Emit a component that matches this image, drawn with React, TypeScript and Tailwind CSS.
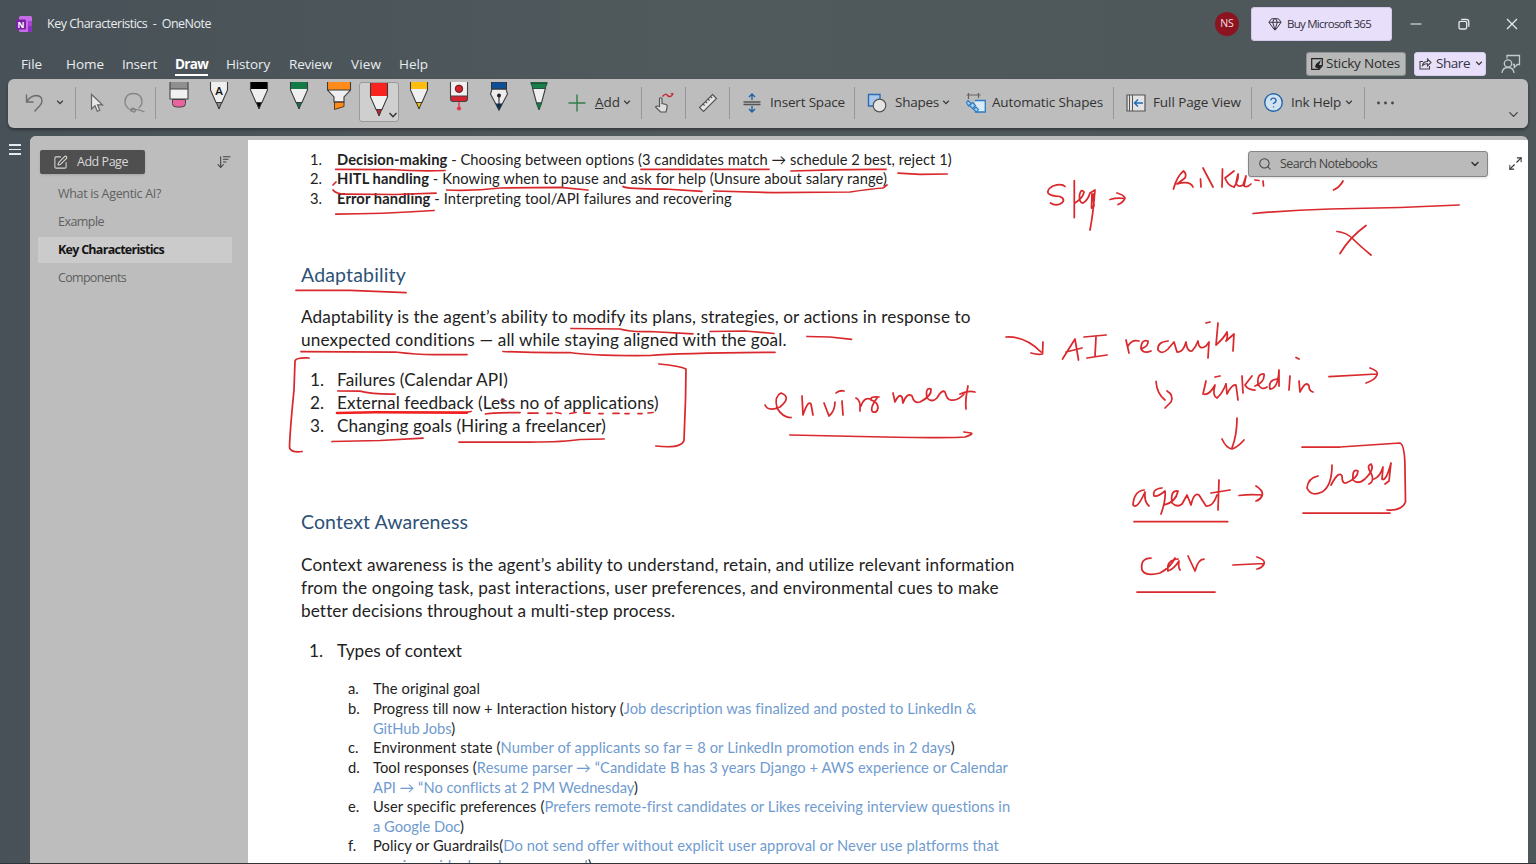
import { useLayoutEffect, useRef, type ReactNode } from "react";
import {
  ArrowDownWideNarrow,
  ChevronDown,
  CircleHelp,
  Gem,
  Maximize2,
  Search,
  SquarePen,
} from "lucide-react";

/** Single line of text whose letter spacing is adjusted to fill `w` pixels. */
function Fit({ w, className = "", children }: { w: number; className?: string; children: ReactNode }) {
  const ref = useRef<HTMLSpanElement>(null);
  useLayoutEffect(() => {
    const el = ref.current;
    if (!el) return;
    el.style.letterSpacing = "0px";
    const natural = el.getBoundingClientRect().width;
    const n = (el.textContent || "").length || 1;
    el.style.letterSpacing = `${(w - natural) / n}px`;
  }, [w]);
  return (
    <span ref={ref} className={`inline-block shrink-0 whitespace-pre ${className}`}>
      {children}
    </span>
  );
}

const Sep = ({ className = "" }: { className?: string }) => (
  <div className={`h-8 w-px shrink-0 bg-[#969696] ${className}`} />
);

const Chev = ({ className = "" }: { className?: string }) => (
  <svg viewBox="0 0 8 5" className={`h-[5px] w-2 shrink-0 ${className}`} fill="none" stroke="#3c3c3c" strokeWidth="1.3">
    <path d="M1.2 0.8 4 3.6 6.8 0.8" />
  </svg>
);

function Pen({ color, tip = color, letter = false, tall = false }: { color: string; tip?: string; letter?: boolean; tall?: boolean }) {
  const d = tall ? 6 : 0;
  return (
    <svg viewBox="0 0 20 40" className="h-10 w-5 shrink-0">
      <path d={`M1.5 0V${8 + d}L7 ${20 + d}h6L18.500 ${8 + d}V0z`} fill="#efefef" />
      {!letter && <path d={`M1 0h18v${7 + d}H1z`} fill={color} />}
      <path d={`M7.300 ${20.500 + d}h5.400L10 ${27 + d}z`} fill={tip} stroke="#333" strokeWidth="1" />
      <path d={`M1.500 0V${8 + d}L7 ${20.500 + d}h6L18.500 ${8 + d}V0`} fill="none" stroke="#3b3b3b" strokeWidth="1.1" />
      {letter && (
        <text x="10" y="12.500" textAnchor="middle" fontSize="11.500" fontWeight="600" fontFamily="Open Sans" fill="#111">
          A
        </text>
      )}
    </svg>
  );
}

const Eraser = () => (
  <svg viewBox="0 0 20 40" className="h-10 w-5">
    <path d="M1 0h18v7H1z" fill="#8f8f8f" />
    <path d="M1 7h18v10H1z" fill="#f1f1f1" />
    <path d="M3.500 17.500h13v4q0 3.500-4 3.500h-5q-4 0-4-3.500z" fill="#e8649f" stroke="#444" />
    <path d="M1 0v17h18V0M1 7h18" fill="none" stroke="#444" strokeWidth="1.1" />
  </svg>
);

const Highlighter = () => (
  <svg viewBox="0 0 26 40" className="h-10 w-[26px]">
    <path d="M1.500 0v8l6.500 7v5h10v-5l6.500-7V0z" fill="#efefef" />
    <path d="M1.500 0h23v8h-23z" fill="#ff8c1a" />
    <path d="M8.500 20h9.500v4.500L8.500 27.500z" fill="#ff8c1a" stroke="#5a3a1a" />
    <path d="M1.500 0v8l6.500 7v5h10v-5l6.500-7V0M1.500 8h23" fill="none" stroke="#3b3b3b" strokeWidth="1.100" />
  </svg>
);

const DotPen = () => (
  <svg viewBox="0 0 20 40" className="h-10 w-5">
    <path d="M1.500 0h17v14h-17z" fill="#f1f1f1" />
    <path d="M1.500 14h17v2.500q0 3-3 3h-11q-3 0-3-3z" fill="#d8232f" />
    <path d="M1.500 0v16.500q0 3 3 3h11q3 0 3-3V0M1.500 14h17" fill="none" stroke="#444" strokeWidth="1.100" />
    <circle cx="10" cy="6.800" r="3.700" fill="#d8232f" stroke="#5a1a1f" />
    <path d="M10 20v5" stroke="#e8334a" strokeWidth="1.400" />
    <circle cx="10" cy="26.500" r="2.100" fill="#e8334a" />
  </svg>
);

const Fountain = () => (
  <svg viewBox="0 0 20 40" className="h-10 w-5">
    <path d="M3 7h14l1.500 5L10 28 1.500 12z" fill="#ececec" stroke="#3b3b3b" strokeWidth="1.100" />
    <path d="M6.500 21.500h7L10 28.500z" fill="#12335c" />
    <path d="M2.500 0h15v7h-15z" fill="#0f4f96" stroke="#333" />
    <path d="M10 13v13" stroke="#222" />
    <circle cx="10" cy="13.500" r="2" fill="#222" />
  </svg>
);

const GreenFineliner = () => (
  <svg viewBox="0 0 20 40" className="h-10 w-5">
    <path d="M3.500 6l4 15h5l4-15z" fill="#efefef" stroke="#3b3b3b" strokeWidth="1.100" />
    <path d="M7.300 21h5.400L10 28z" fill="#15804a" stroke="#2b4d3b" />
    <path d="M2 0h16v1.500l-2 5H4l-2-5z" fill="#15804a" stroke="#23523a" />
    <path d="M2 1.500h16" stroke="#23523a" />
  </svg>
);

const PenCell = ({ children }: { children: ReactNode }) => (
  <div className="flex h-full w-10 shrink-0 justify-center pt-[3px]">{children}</div>
);

const ribbonText = "font-['Open_Sans','Noto_Sans',sans-serif] text-[13.500px] text-[#333]";

function TitleBar() {
  return (
    <header className="flex h-12 shrink-0 items-center pl-4">
      <svg viewBox="0 0 16 16" className="h-4 w-4">
        <rect x="3" y="0" width="13" height="16" rx="1.500" fill="#c86be8" />
        <path d="M12 5h4v5h-4z" fill="#a446cf" />
        <path d="M12 10h4v5q0 1-1 1h-3z" fill="#8a2fc0" />
        <rect x="0" y="3.500" width="10" height="10" rx="1.200" fill="#7a1fa8" />
        <text x="5" y="11.600" textAnchor="middle" fontSize="8.500" fontWeight="700" fontFamily="Open Sans" fill="#fff">N</text>
      </svg>
      <Fit w={164} className="ml-[15px] pt-px text-[12.500px] text-[#e9edf0]">{"Key Characteristics  -  OneNote"}</Fit>
      <div className="ml-auto flex h-6 w-6 items-center justify-center rounded-full bg-[#8c1420] text-[10.500px] text-[#f3dfe1]">NS</div>
      <button className="ml-3 flex h-[34px] w-[141px] items-center rounded-[3px] border border-[#d3c9ea] bg-[#e8dffb] pl-4 text-[#33303b]">
        <Gem size={14} strokeWidth={1.700} />
        <Fit w={84} className="ml-[5px] text-[11.500px]">Buy Microsoft 365</Fit>
      </button>
      <svg viewBox="0 0 12 12" className="ml-[18px] h-3 w-3" stroke="#e6eaec" strokeWidth="1.100"><path d="M0.500 6h11" /></svg>
      <svg viewBox="0 0 12 12" className="ml-9 h-3 w-3" fill="none" stroke="#e6eaec" strokeWidth="1.300">
        <rect x="1" y="3.300" width="7.700" height="7.700" rx="1.500" />
        <path d="M3.300 1.300h5q2.500 0 2.500 2.500v5" />
      </svg>
      <svg viewBox="0 0 12 12" className="ml-9 mr-[18px] h-3 w-3" stroke="#e6eaec" strokeWidth="1.300"><path d="M1 1l10 10M11 1 1 11" /></svg>
    </header>
  );
}

function MenuBar() {
  return (
    <nav className="flex h-[31px] shrink-0 items-center pl-[21px] pr-[15px] text-[13.500px] text-[#e9edf0]">
      <Fit w={21} className="pt-px">File</Fit>
      <Fit w={38} className="ml-6 pt-px">Home</Fit>
      <Fit w={35} className="ml-[18px] pt-px">Insert</Fit>
      <div className="ml-[18px] flex h-full flex-col pt-1.5">
        <Fit w={33} className="font-bold text-white">Draw</Fit>
        <div className="h-0.5 bg-white" />
      </div>
      <Fit w={44} className="ml-[18px] pt-px">History</Fit>
      <Fit w={43} className="ml-[19px] pt-px">Review</Fit>
      <Fit w={30} className="ml-[19px] pt-px">View</Fit>
      <Fit w={29} className="ml-[18px] pt-px">Help</Fit>
      <button className="ml-auto flex h-6 w-[100px] items-center rounded-[3px] border border-[#8f9192] bg-[#b7b8b8] pl-1 text-[#2d2d2d]">
        <svg viewBox="0 0 12 12" className="h-3 w-3" fill="none" stroke="#222" strokeWidth="1.200">
          <path d="M0.700 0.700h10.600v7L8 11.300H0.700z" />
          <path d="M4 9l1-3 5-4-2 5 3 0-3 4z" fill="#222" stroke="none" />
        </svg>
        <Fit w={74} className="ml-[3px]">Sticky Notes</Fit>
      </button>
      <button className="ml-2 flex h-6 w-[72px] items-center rounded-[3px] border border-[#d6cdec] bg-[#e8dffb] pl-1 text-[#37333f]">
        <svg viewBox="0 0 13 13" className="h-[13px] w-[13px]" fill="none" stroke="#444" strokeWidth="1.100">
          <path d="M4 4.500H1v7.500h9.500V9" />
          <path d="M3.500 8.500q0.500-4 5-4V2L12 5.500 8.500 9V6.800Q5.500 6.500 3.500 8.500z" />
        </svg>
        <Fit w={34} className="ml-1">Share</Fit>
        <Chev className="ml-[5px]" />
      </button>
      <svg viewBox="0 0 20 20" className="ml-[15px] h-5 w-5" fill="none" stroke="#c3cacd" strokeWidth="1.300">
        <circle cx="7" cy="9.500" r="3.700" />
        <path d="M1 19q0.500-5.500 6-5.500t6 5.500" />
        <path d="M6 4.500V1.500h12.500v9h-2.200l-3 3v-3h-1.500" />
      </svg>
    </nav>
  );
}

function Ribbon() {
  return (
    <div className={`ml-2 mr-2 flex h-[49px] shrink-0 items-center rounded-md bg-[#bdbdbd] pb-0.5 shadow-[0_2px_3px_rgba(0,0,0,0.350)] ${ribbonText}`}>
      <svg viewBox="0 0 20 20" className="ml-4 h-5 w-5 shrink-0" fill="none" stroke="#6c6c6c" strokeWidth="1.400">
        <path d="M2.500 1.500v7.500h7" />
        <path d="M2.500 9q4-6.500 10-6.500 5.500 0.500 5.500 5.500 0 2.500-2.500 5l-5 5.500" />
      </svg>
      <Chev className="ml-3" />
      <Sep className="ml-[11px]" />
      <svg viewBox="0 0 14 20" className="ml-3.5 h-5 w-3.5 shrink-0" fill="#e8e8e8" stroke="#666" strokeWidth="1.200">
        <path d="M1.500 1.500v14.500l3.500-3.300 2.300 5.500 2.500-1-2.300-5.400h5z" />
      </svg>
      <svg viewBox="0 0 22 22" className="ml-5 h-[22px] w-[22px] shrink-0" fill="none" stroke="#858585" strokeWidth="1.300">
        <path d="M5 17Q1 14 1 9.500 1.500 1.500 9.500 1.500T18 9.500q0 4-3.500 6.500" />
        <path d="M6 18.500q1-3 4.500-2 2 3-0.500 3.500-3-0.500-4-2 8-2 14.500 2" />
      </svg>
      <Sep className="ml-[9px]" />
      <div className="ml-[3px] flex h-[47px]">
        <PenCell><Eraser /></PenCell>
        <PenCell><Pen color="#eee" tip="#8a8a8a" letter /></PenCell>
        <PenCell><Pen color="#000" /></PenCell>
        <PenCell><Pen color="#137a45" /></PenCell>
        <PenCell><Highlighter /></PenCell>
        <div className="flex h-full w-10 shrink-0 items-start pt-[3px]">
          <div className="flex h-10 w-10 rounded-[3px] border border-[#999] bg-[#cfcfcf] pl-[9px]">
            <Pen color="#f8231f" tip="#c9202a" tall />
            <svg viewBox="0 0 10 6" className="-ml-px mt-[29px] h-1.5 w-2.5 shrink-0" fill="none" stroke="#333" strokeWidth="1.400"><path d="M1.500 1 5 4.700 8.500 1" /></svg>
          </div>
        </div>
        <PenCell><Pen color="#ffbe0d" /></PenCell>
        <PenCell><DotPen /></PenCell>
        <PenCell><Fountain /></PenCell>
        <PenCell><GreenFineliner /></PenCell>
      </div>
      <svg viewBox="0 0 18 18" className="ml-[9px] h-[18px] w-[18px] shrink-0" stroke="#2f7d48" strokeWidth="1.400"><path d="M9 0.500v17M0.500 9h17" /></svg>
      <Fit w={25} className="ml-[9px]"><span className="underline">A</span>dd</Fit>
      <Chev className="ml-[3px]" />
      <Sep className="ml-2.5" />
      <svg viewBox="0 0 20 20" className="ml-3 h-5 w-5 shrink-0" fill="none" stroke="#555" strokeWidth="1.200">
        <path d="M5.500 12.500V5.500q1.400-1.500 2.500 0v5l4 1q1.500 0.500 1.200 2.500l-1.200 5H6.500L1.500 14q1-1.700 4-0.500z" fill="#dedede" />
        <path d="M8.500 3.500q3-4 5.500-0.500 3 1.500 4.500-1.500 0.800-2-1.700-1" stroke="#c5283c" strokeWidth="1.500" />
      </svg>
      <Sep className="ml-[11px]" />
      <svg viewBox="0 0 20 20" className="ml-3 h-5 w-5 shrink-0" fill="#e6e6e6" stroke="#555" strokeWidth="1.200">
        <path d="M14.500 1.500 18.500 5.500 5.500 18.500 1.500 14.500z" />
        <path d="M5 11l1.700 1.700M7.500 8.500l1.700 1.700M10 6l1.700 1.700M12.500 3.500l1.700 1.700" />
      </svg>
      <Sep className="ml-[11px]" />
      <svg viewBox="0 0 18 20" className="ml-[13px] h-5 w-[18px] shrink-0" fill="none" stroke="#1d62a5" strokeWidth="1.400">
        <path d="M9 1v6M6 4l3-3 3 3M9 13v6M6 16l3 3 3-3" />
        <path d="M0.500 9h17M0.500 11.500h17" stroke="#555" strokeWidth="1.300" />
      </svg>
      <Fit w={75} className="ml-[9px]">Insert Space</Fit>
      <Sep className="ml-[9px]" />
      <svg viewBox="0 0 20 20" className="ml-3 h-5 w-5 shrink-0">
        <path d="M1.500 1.500h11.500v11.500H1.500z" fill="#a9c8ee" stroke="#2f6cb0" strokeWidth="1.400" />
        <circle cx="12.500" cy="12.500" r="6.300" fill="#e4e4e4" stroke="#555" strokeWidth="1.200" />
      </svg>
      <Fit w={44} className="ml-2">Shapes</Fit>
      <Chev className="ml-[3px]" />
      <svg viewBox="0 0 20 20" className="ml-4 h-5 w-5 shrink-0" fill="none">
        <path d="M0.500 2h14M2.500 0v6M12.500 0v5" stroke="#6b625c" strokeWidth="1.200" />
        <path d="M9 7.500h10.300V19H9.500v-4" fill="#dce9f7" stroke="#2a7cc4" strokeWidth="1.300" />
        <path d="M2 7.500l3 3-2.500 2.500L0.500 9.500zM6.500 9.500l3 3-3 3-3-3zM10 14l2.500 2.500-2 2.500-3-2.500z" fill="#a8d1f2" stroke="#2a7cc4" strokeWidth="1.100" />
      </svg>
      <Fit w={111} className="ml-1.5">Automatic Shapes</Fit>
      <Sep className="ml-2.5" />
      <svg viewBox="0 0 20 18" className="ml-3 h-[18px] w-5 shrink-0">
        <path d="M1 1h18v16H1z" fill="#e4e4e4" stroke="#555" strokeWidth="1.200" />
        <path d="M3.500 1v16M6.500 1v16" stroke="#555" />
        <path d="M17 9H9M12 5.500 8.500 9l3.500 3.500" fill="none" stroke="#1d6ab5" strokeWidth="1.400" />
      </svg>
      <Fit w={88} className="ml-[7px]">Full Page View</Fit>
      <Sep className="ml-2.5" />
      <CircleHelp size={21} strokeWidth={1.600} className="ml-[11px] shrink-0 fill-[#d3e2f0] text-[#2467a8]" />
      <Fit w={50} className="ml-[7px]">Ink Help</Fit>
      <Chev className="ml-1" />
      <Sep className="ml-[11px]" />
      <svg viewBox="0 0 20 4" className="ml-[11px] h-1 w-5 shrink-0" fill="#444">
        <circle cx="2.500" cy="2" r="1.400" /><circle cx="9.500" cy="2" r="1.400" /><circle cx="16.500" cy="2" r="1.400" />
      </svg>
      <ChevronDown size={15} strokeWidth={2} className="ml-auto mr-[7px] mt-6 shrink-0 text-[#444]" />
    </div>
  );
}

function Sidebar() {
  const row = "flex h-7 items-center pl-[18px] pt-px text-[12.500px] text-[#5f5f5f]";
  return (
    <aside className="flex w-[218px] shrink-0 flex-col bg-[#bdbdbd] pl-2.5 pt-3.5">
      <div className="flex h-6 items-center">
        <button className="flex h-6 w-[105px] items-center rounded-[2px] bg-[#4f4f4f] pl-[13px] text-[#d8d8d8] shadow-sm">
          <SquarePen size={15} strokeWidth={1.700} />
          <Fit w={51} className="ml-[9px] text-[12.500px]">Add Page</Fit>
        </button>
        <ArrowDownWideNarrow size={16} strokeWidth={1.600} className="ml-[71px] text-[#444]" />
      </div>
      <div className="mt-1.5 flex w-[192px] flex-col">
        <div className={row}><Fit w={103}>What is Agentic AI?</Fit></div>
        <div className={row}><Fit w={46}>Example</Fit></div>
        <div className="-ml-0.5 my-px flex h-[26px] items-center bg-[#cbcbcb] pl-5 pt-px text-[12.500px] font-bold text-[#151515]">
          <Fit w={106}>Key Characteristics</Fit>
        </div>
        <div className={row}><Fit w={68}>Components</Fit></div>
      </div>
    </aside>
  );
}

const Item = ({ n, w, wn, className = "", children }: { n: string; w: number; wn: string; className?: string; children: ReactNode }) => (
  <div className={`flex ${className}`}>
    <span className={`shrink-0 ${wn}`}>{n}</span>
    <Fit w={w}>{children}</Fit>
  </div>
);

const Blue = ({ children }: { children: ReactNode }) => <span className="text-[#6f9bd0]">{children}</span>;

const inkStrokes = [
  // underlines in the first list
  "M335.700 169.300L390 169.500Q420 171.500 445 170.500",
  "M333 185L336 182M333 190Q336 194 345 194L395 194.500L436 193.200",
  "M446.700 190Q475 191 500 188L560 187.300L588 190",
  "M335.700 214Q380 214 434 210.500",
  "M623 186.500Q626 189 665 189L702 191.300",
  "M641 169.300H769M791 171Q840 169 886 169.300M898 173.200L920 174.300L947 174",
  "M714 191L773 192.700L850 192Q870 189 883 188L887 185",
  // adaptability
  "M296 290.300L350 290.300L406 292.700",
  "M571 328.500L620 329Q630 332 650 331.500L693 333.800",
  "M710 331.500L745 331L774 333.500",
  "M807 336.500L830 337L851.500 339.300",
  "M301 351.700L395 352Q420 355 440 354.500L467 354.500",
  "M503 351.500Q540 353 570 352.500Q590 356 650 355.500Q680 353 775 352.300",
  "M309 358Q296 357.500 295 361L294 390Q290 430 289.500 447Q290 453 302 451.500",
  "M659 364Q680 366 686 369L685.500 400L684 440Q682 449 656 446",
  "M338 391L360 391.200Q372 394.500 395 394.200",
  "M485.500 414Q490 412.500 520 412.500M528 413H538M547 413.300H552M556 412.500L561 413.500M570 413.500L576 412.500M584 413H590M599 413.500H603M613 413.300H619M625 413.500H629M638 413.500H642M648 413L653 412.500",
  "M332 441.500L380 440.500L423 438.200",
  "M459 442L530 442Q565 442 580 439.500L604 439",
  // environment
  "M765 405Q768 412 780 407Q792 397 781 393Q774 396 777 408Q783 418 791 417.500",
  "M802 396L803 415Q808 400 811 404L813 415",
  "M824 403L829 416Q835 411 835 402M842 401L843 415M836 393Q839 390 844 391",
  "M856 398Q861 400 860 411M861 406Q864 397 870 399",
  "M879 397Q870 396 871 400Q878 402 878 408Q877 413 873 412Q869 409 877 398",
  "M893 393L895 402Q899 393 902 397L903 403Q907 392 912 396Q914 404 920 402Q932 396 931 389Q925 387 927 398Q932 403 937 398Q942 389 945 392Q947 400 951 400Q958 401 964 394",
  "M968 386Q965 400 966 409M960 394Q968 390 975 392",
  "M790 435L860 436.500Q950 438.500 965 437Q974 434 971 433L964 432",
  // step
  "M1065 186.500Q1062 183 1053 186Q1047 189 1048 193Q1050 196 1060 196.500Q1067 200 1060 204Q1055 206 1050.500 203",
  "M1074.300 180.500V217.500M1075 203Q1083 198 1084 192Q1081 188 1079.500 195Q1079 203 1083 203Q1088 200 1090 193L1095 190Q1093 215 1090 230M1092 194L1091.500 208L1094 206L1093 194",
  "M1110 199.500Q1117 197.500 1124 198.500M1117 193Q1124 195 1125 198Q1124 202 1118 204.500",
  // linked
  "M1173.500 189Q1177 176 1183.500 171Q1187 174 1185 178L1177 184Q1190 180 1193 187",
  "M1200.500 179L1201 187M1203 168L1213 187M1222.500 169L1222 187M1234 171L1225 178Q1228 186 1234 187",
  "M1234 187Q1239 180 1238 174L1236 183Q1238 188 1243 185L1246 176L1244 186Q1247 188 1251 184M1255 180L1259 180.500M1263 181L1263.500 186",
  "M1343 181Q1340 187 1333.500 190",
  "M1253 213.500Q1290 210 1330 209L1400 207.500L1459 205",
  "M1337 231.500Q1346 232 1353 239T1371 255M1366 225.500Q1350 237 1340 253.500",
  // AI recruiting
  "M1006 337Q1025 336 1041 352M1043 342L1042.500 354Q1038 355 1031 353",
  "M1062.500 359L1075 339L1078.500 360M1066 352L1082 348",
  "M1084 337L1106 335M1096 337L1095 356M1087 358L1107 355",
  "M1126 340L1129 353M1128 346Q1132 339 1139 341",
  "M1141 349Q1149 346 1148 341Q1141 339 1141 349Q1144 354 1151 351",
  "M1168 341Q1157 342 1158 350Q1162 355 1168 349L1174 342L1177 352Q1183 353 1186 342Q1187 352 1192 351Q1196 347 1198 341Q1199 351 1206 346L1209 342L1208 358M1206 323L1210 322",
  "M1218 323L1216 345Q1224 338 1227 332Q1228 338 1226 341L1234 334L1233 351",
  // linkedin
  "M1156 381.500Q1157 394 1165 400M1167 391Q1174 395 1171 402L1165 408",
  "M1206 381L1203 394Q1209 396 1215 385Q1212 396 1217 398Q1222 394 1226 384M1215 377L1220 376",
  "M1226 384L1227 394Q1232 384 1236 385L1238 400M1242 376L1243 393M1252 376L1245 385Q1248 390 1255 390",
  "M1255 386Q1265 382 1264 374Q1257 373 1258 384Q1261 391 1267 387M1277 379Q1268 380 1270 389Q1278 389 1279 370L1279 386",
  "M1290 376L1289 390M1299 381L1300 392Q1306 380 1309 386Q1309 391 1313 392M1296 357.500L1299 359",
  "M1329 376.700L1377 374M1370 368Q1379 371 1377 375Q1375 380 1366 383",
  "M1237 418Q1237 435 1232 448M1222 439Q1226 448 1232 449Q1238 447 1244 440",
  // agent
  "M1144 490Q1134 491 1133 505Q1137 510 1145 492Q1144 502 1149 506",
  "M1162 488Q1152 489 1154 496Q1158 497 1165 491Q1166 500 1161 514",
  "M1164 505Q1176 502 1178 491Q1170 490 1172 503Q1177 508 1182 504L1187 495L1191 505Q1194 492 1199 495L1206 506Q1213 507 1217 495M1219 480L1218 510M1211 493L1230 490",
  "M1239 495.500Q1250 494 1262 495M1256 486Q1264 491 1262 496Q1260 500 1256 501M1134 521.700H1227.700",
  // car
  "M1151 558Q1140 558 1142 570Q1146 577 1160 573Q1170 568 1175 558M1178 559Q1166 560 1168 571Q1174 569 1179 561Q1178 567 1180 570",
  "M1188 556L1195 571Q1198 559 1204 559",
  "M1233 565L1264 563.500M1257 557Q1266 560 1264 564Q1262 568 1257 569M1137 592H1215",
  // chess
  "M1302 447L1340 447L1400 443Q1405 445 1405 470L1405.500 502Q1402 511 1387 510M1303 513H1390",
  "M1318 476Q1308 478 1307 488Q1311 497 1322 492Q1332 486 1332 465M1331 485Q1339 470 1342 476Q1342 484 1346 483Q1358 478 1358 471Q1352 468 1353 480Q1358 485 1365 479Q1375 469 1371 464Q1366 466 1371 473Q1375 481 1369 484M1374 479Q1380 477 1383 467L1382 479Q1386 482 1391 463L1389 481L1385 484",
];

function Ink() {
  return (
    <svg viewBox="248 140 1280 723" className="pointer-events-none absolute inset-0 h-[723px] w-[1280px]" fill="none" stroke="#d9292d" strokeWidth="1.750" strokeLinecap="round" strokeLinejoin="round">
      {inkStrokes.map((d) => <path key={d} d={d} />)}
      <path d="M337 413L375 412.300L467 412.600" strokeWidth="2.600" stroke="#f02020" />
      <path d="M468 412L471 411.500" />
      <circle cx="502.700" cy="400.500" r="2.200" fill="#7d3440" stroke="none" />
    </svg>
  );
}

function Page() {
  return (
    <main className="relative h-[723px] w-[1280px] shrink-0 overflow-hidden bg-white font-['Lato','Open_Sans',sans-serif] text-[#222]">
      <div className="flex flex-col pl-[53px] pt-[9.500px]">
        <div className="flex flex-col pl-[9px] text-[14.700px] leading-[19.600px]">
          <Item n="1." wn="w-[27px]" w={615}><b>Decision-making</b>{" - Choosing between options (3 candidates match → schedule 2 best, reject 1)"}</Item>
          <Item n="2." wn="w-[27px]" w={550}><b>HITL handling</b> - Knowing when to pause and ask for help (Unsure about salary range)</Item>
          <Item n="3." wn="w-[27px]" w={395}><b>Error handling</b> - Interpreting tool/API failures and recovering</Item>
        </div>
        <Fit w={105} className="mt-[52.500px] self-start text-[19.500px] leading-7 text-[#2e5277]">Adaptability</Fit>
        <div className="mt-4 flex flex-col items-start text-[17.200px] leading-[23px]">
          <Fit w={670}>Adaptability is the agent’s ability to modify its plans, strategies, or actions in response to</Fit>
          <Fit w={486}>unexpected conditions — all while staying aligned with the goal.</Fit>
        </div>
        <div className="mt-[17.400px] flex flex-col pl-[9px] text-[17.200px] leading-[23px]">
          <Item n="1." wn="w-[27px]" w={171}>Failures (Calendar API)</Item>
          <Item n="2." wn="w-[27px]" w={322}>External feedback (Less no of applications)</Item>
          <Item n="3." wn="w-[27px]" w={269}>Changing goals (Hiring a freelancer)</Item>
        </div>
        <Fit w={167} className="mt-[70.600px] self-start text-[19.500px] leading-7 text-[#2e5277]">Context Awareness</Fit>
        <div className="mt-[17px] flex flex-col items-start text-[17.200px] leading-[23px]">
          <Fit w={714}>Context awareness is the agent’s ability to understand, retain, and utilize relevant information</Fit>
          <Fit w={698}>from the ongoing task, past interactions, user preferences, and environmental cues to make</Fit>
          <Fit w={374}>better decisions throughout a multi-step process.</Fit>
        </div>
        <div className="mt-[17px] flex pl-2 text-[17.200px] leading-[23px]">
          <Item n="1." wn="w-7" w={125}>Types of context</Item>
        </div>
        <div className="mt-[17.700px] flex flex-col pl-[47px] text-[14.700px] leading-[19.630px]">
          <Item n="a." wn="w-[25px]" w={107}>The original goal</Item>
          <Item n="b." wn="w-[25px]" w={604}>Progress till now + Interaction history (<Blue>{"Job description was finalized and posted to LinkedIn &"}</Blue></Item>
          <Item n="" wn="w-[25px]" w={82}><Blue>GitHub Jobs</Blue>)</Item>
          <Item n="c." wn="w-[25px]" w={582}>Environment state (<Blue>Number of applicants so far = 8 or LinkedIn promotion ends in 2 days</Blue>)</Item>
          <Item n="d." wn="w-[25px]" w={635}>Tool responses (<Blue>Resume parser → “Candidate B has 3 years Django + AWS experience or Calendar</Blue></Item>
          <Item n="" wn="w-[25px]" w={265}><Blue>API → “No conflicts at 2 PM Wednesday</Blue>)</Item>
          <Item n="e." wn="w-[25px]" w={637}>User specific preferences (<Blue>Prefers remote-first candidates or Likes receiving interview questions in</Blue></Item>
          <Item n="" wn="w-[25px]" w={91}><Blue>a Google Doc</Blue>)</Item>
          <Item n="f." wn="w-[25px]" w={625}>Policy or Guardrails(<Blue>Do not send offer without explicit user approval or Never use platforms that</Blue></Item>
          <Item n="" wn="w-[25px]" w={219}><Blue>require paid ads unless approved</Blue>)</Item>
        </div>
      </div>
      <Ink />
      <div className="absolute right-10 top-[11px] flex h-[26px] w-60 items-center rounded-[3px] border border-[#858585] bg-[#bababa] pl-[9px] pr-1.5 font-['Open_Sans','Noto_Sans',sans-serif] text-[12.500px] text-[#444] shadow-sm">
        <Search size={14} strokeWidth={1.800} />
        <Fit w={97} className="ml-2">Search Notebooks</Fit>
        <ChevronDown size={12} strokeWidth={3} className="ml-auto text-[#333]" />
      </div>
      <Maximize2 size={15} strokeWidth={1.700} className="absolute right-[5px] top-4 text-[#333]" />
    </main>
  );
}

export default function App() {
  return (
    <div className="flex h-[864px] w-[1536px] flex-col overflow-hidden bg-[linear-gradient(90deg,#485157_0%,#50595c_45%,#4d5659_100%)] font-['Open_Sans','Noto_Sans',sans-serif]">
      <TitleBar />
      <MenuBar />
      <Ribbon />
      <div className="mt-2 flex h-[727px] shrink-0">
        <div className="flex w-[30px] shrink-0 flex-col items-end gap-[3px] pr-[9px] pt-2">
          <div className="h-[1.500px] w-3 bg-[#e4ebee]" />
          <div className="h-[1.500px] w-3 bg-[#e4ebee]" />
          <div className="h-[1.500px] w-3 bg-[#e4ebee]" />
        </div>
        <div className="flex w-[1498px] overflow-hidden rounded-t-md bg-[#bdbdbd]">
          <Sidebar />
          <div className="pt-1"><Page /></div>
        </div>
      </div>
      <div className="h-px shrink-0 bg-[#2f3335]" />
    </div>
  );
}
